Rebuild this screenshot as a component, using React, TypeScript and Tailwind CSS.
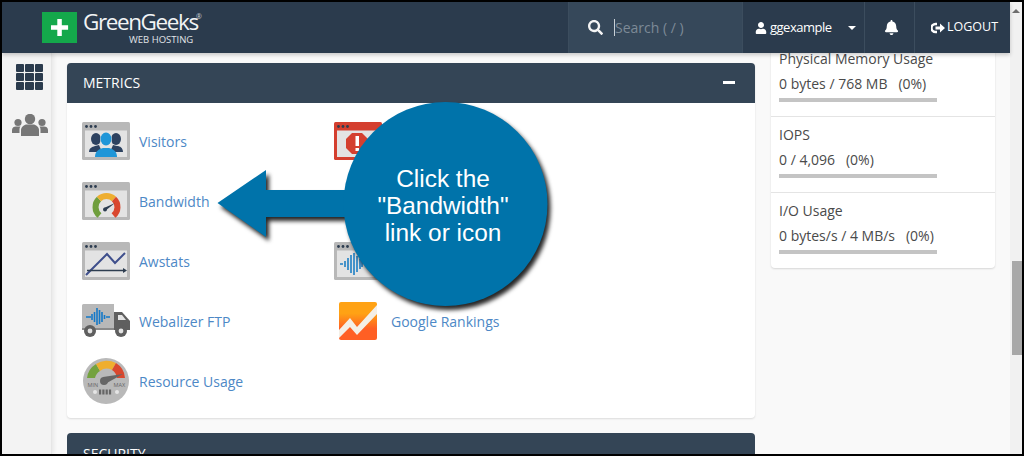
import React from "react";
import { FaSearch, FaBell, FaUser } from "react-icons/fa";

function WindowIcon({ border = "#b8b8b8", children }: { border?: string; children?: React.ReactNode }) {
  return (
    <svg width="48" height="38" viewBox="0 0 48 38" className="block">
      <rect x="0" y="0" width="48" height="38" rx="1.5" fill={border} />
      <rect x="3" y="8.5" width="42" height="26.5" fill="#e3e3e3" />
      <circle cx="4.5" cy="4.5" r="1.4" fill="#2d3d50" />
      <circle cx="9" cy="4.5" r="1.4" fill="#2d3d50" />
      <circle cx="13.5" cy="4.5" r="1.4" fill="#2d3d50" />
      {children}
    </svg>
  );
}

function Visitors() {
  return (
    <WindowIcon>
      <g fill="#2d4260">
        <ellipse cx="14" cy="17" rx="5" ry="6" />
        <path d="M7 30c0-4 3-5 6-6l4-1 3 7z" />
        <ellipse cx="34" cy="17" rx="5" ry="6" />
        <path d="M41 30c0-4-3-6-6-6l-4-1-3 7z" />
      </g>
      <ellipse cx="24" cy="17" rx="6" ry="7" fill="#e3e3e3" />
      <ellipse cx="24" cy="17" rx="5.500" ry="6.500" fill="#1f96d8" />
      <path d="M13 35c0-6 4-8 8-9h6c4 1 8 3 8 9z" fill="#1f96d8" />
    </WindowIcon>
  );
}

function Bandwidth() {
  return (
    <WindowIcon>
      <g fill="none" strokeWidth="6">
        <path d="M17.500 33.500A11 11 0 0 1 17 17" stroke="#6f9e3d" />
        <path d="M17 17A11 11 0 0 1 32 17" stroke="#eeae30" />
        <path d="M32 17A11 11 0 0 1 31.500 33.500" stroke="#d9482f" />
      </g>
      <path d="M22 26l11-5-10 8z" fill="#2d3d50" />
      <circle cx="23" cy="27.500" r="2" fill="#2d3d50" />
    </WindowIcon>
  );
}

function Awstats() {
  return (
    <WindowIcon>
      <path d="M4 33L25 12l8 9L43 11" fill="none" stroke="#3f4f8c" strokeWidth="2" />
      <path d="M5 28.500h37" stroke="#2d3d50" strokeWidth="1.600" />
      <path d="M45 28.500l-4-2.500v5z" fill="#2d3d50" />
    </WindowIcon>
  );
}

function ErrorsIcon() {
  return (
    <WindowIcon border="#d43f2f">
      <path d="M18 11h10l6 6v9l-6 6H18l-6-6v-9z" fill="#d43f2f" />
      <rect x="21.500" y="14" width="3.500" height="10" fill="#fff" />
      <rect x="21.500" y="26" width="3.500" height="3" fill="#fff" />
    </WindowIcon>
  );
}

function WebalizerIcon() {
  return (
    <WindowIcon>
      <path d="M6 22h3M11 19v6M14 16v12M17 13v18M20 11v22M23 14v16M26 17v10M28 19v6" stroke="#1f7fc4" strokeWidth="1.600" fill="none" />
    </WindowIcon>
  );
}

function Truck() {
  return (
    <svg width="48" height="34" viewBox="0 0 48 34" className="block">
      <path d="M0 1.500A1.500 1.500 0 0 1 1.500 0H32v25H0z" fill="#b8b8b8" />
      <path d="M32 8h8l8 9v9H32z" fill="#5f5f5f" />
      <path d="M36 11h4l4 5h-8z" fill="#e3e3e3" />
      <rect x="0" y="24" width="32" height="2" fill="#8a8a8a" />
      <circle cx="8" cy="27" r="6" fill="#5f5f5f" />
      <circle cx="8" cy="27" r="2.400" fill="#e3e3e3" />
      <circle cx="39" cy="27" r="6" fill="#5f5f5f" />
      <circle cx="39" cy="27" r="2.400" fill="#e3e3e3" />
      <path d="M4 13h5M10 10v6M12.500 8v10M15 4v17M17.500 6v14M20 8v10M22.500 11v4M24 13h4" stroke="#1378c8" strokeWidth="1.600" fill="none" />
    </svg>
  );
}

function ResourceGauge() {
  return (
    <svg width="46" height="46" viewBox="0 0 46 46" className="block">
      <circle cx="23" cy="23" r="23" fill="#b9b9b9" />
      <g transform="translate(0 -3)">
        <path d="M4 23A19 19 0 0 1 13 9l4 7a11 11 0 0 0-5 7z" fill="#74a23f" />
        <path d="M13 9a19 19 0 0 1 20-1l-4 7a11 11 0 0 0-12 1z" fill="#efae2e" />
        <path d="M33 8a19 19 0 0 1 9 15h-8a11 11 0 0 0-5-8z" fill="#d9482f" />
      </g>
      <path d="M40 16L20 19l2 7z" fill="#666" />
      <circle cx="21" cy="23" r="4" fill="#666" />
      <text x="4.500" y="28.500" fontSize="5.500" fill="#666" fontFamily="Open Sans">MIN</text>
      <text x="30.500" y="28.500" fontSize="5.500" fill="#666" fontFamily="Open Sans">MAX</text>
      <circle cx="12" cy="34" r="2" fill="#e5e5e5" />
      <circle cx="34" cy="34" r="2" fill="#e5e5e5" />
      <g fill="#666">
        <rect x="16" y="31.500" width="2.200" height="5" />
        <rect x="19.300" y="31.500" width="2.200" height="5" />
        <rect x="22.600" y="31.500" width="2.200" height="5" />
        <rect x="25.900" y="31.500" width="2.200" height="5" />
      </g>
    </svg>
  );
}

function GoogleRankings() {
  return (
    <svg width="38" height="38" viewBox="0 0 38 38" className="block">
      <defs>
        <linearGradient id="gr" x1="0" y1="0" x2="0" y2="1">
          <stop offset="0.3" stopColor="#ffa214" />
          <stop offset="0.7" stopColor="#ff5f24" />
        </linearGradient>
      </defs>
      <rect width="38" height="38" rx="2" fill="url(#gr)" />
      <path d="M0 28L11 16l7 9L38 3v9L18 33l-7-8-11 11z" fill="#f4efe6" />
    </svg>
  );
}

function Item({ icon, label }: { icon: React.ReactNode; label: string }) {
  return (
    <div className="flex h-[60px] items-center">
      <div className="flex w-[48px] shrink-0 justify-center">{icon}</div>
      <a className="ml-[9px] text-[14px] text-[#4d88c6]">{label}</a>
    </div>
  );
}

function Stat({ title, value, pct, first }: { title: string; value: string; pct: string; first?: boolean }) {
  return (
    <div className={`h-[76px] px-2 ${first ? "pt-[9px]" : "border-t border-[#e4e4e4] pt-[8px]"}`}>
      <div className="h-[19px] text-[14px] leading-[19px] text-[#4a4a4a]">{title}</div>
      <div className="mt-[6px] h-[19px] whitespace-pre text-[14px] leading-[19px] text-[#4a4a4a]">
        {value}
        {"   "}
        {pct}
      </div>
      <div className="mt-[5px] h-[4px] w-[158px] bg-[#c4c4c4]" />
    </div>
  );
}

export default function App() {
  return (
    <div className="relative flex h-screen flex-col overflow-hidden border-2 border-black bg-[#f9f9f9] font-['Open_Sans','Liberation_Sans',sans-serif]">
      <div className="flex min-h-0 flex-1">
        <div className="flex min-w-0 flex-1 flex-col">
          {/* Header */}
          <header className="relative z-10 flex h-[51px] shrink-0 items-center bg-[#2b3b4d] text-white shadow-[0_2px_4px_rgba(0,0,0,0.2)]">
            <div className="ml-[40px] flex h-[31px] w-[35px] items-center justify-center bg-[#14a84b]">
              <svg width="19" height="19" viewBox="0 0 19 19">
                <path d="M7 0h5v7h7v5h-7v7H7v-7H0V7h7z" fill="#fff" transform="translate(1 1) scale(0.9)" />
              </svg>
            </div>
            <div className="relative ml-[6px] h-[31px] w-[118px]">
              <div className="absolute -top-[2px] left-0 text-[22.500px] leading-[24px] tracking-[-1.4px] text-[#f2f4f5]">GreenGeeks</div>
              <div className="absolute left-[46px] top-[22px] text-[9.500px] leading-[12px] text-[#e0e4e8]">WEB HOSTING</div>
              <div className="absolute left-[113px] top-[1px] text-[7px] leading-[8px] text-[#ccd2d8]">®</div>
            </div>
            <div className="ml-[367px] flex h-full w-[175px] items-center border-x border-[#3c4d5e] bg-[#36485a]">
              <FaSearch className="ml-[19px] text-[15px] text-[#f4f4f4]" />
              <span className="ml-[11px] h-[17px] w-px bg-[#c9d0d6]" />
              <span className="text-[14px] text-[#7d8a97]">Search ( / )</span>
            </div>
            <div className="flex h-full w-[122px] items-center border-r border-[#3c4d5e]">
              <FaUser className="ml-[12px] text-[12px]" />
              <span className="ml-[3px] text-[13px] font-medium tracking-[-0.5px]">ggexample</span>
              <span className="ml-[16px] mt-[1px] h-0 w-0 border-x-[4px] border-t-[4px] border-x-transparent border-t-white" />
            </div>
            <div className="flex h-full w-[50px] items-center justify-center border-r border-[#3c4d5e] pl-[3px]">
              <FaBell className="text-[15px]" />
            </div>
            <div className="flex h-full flex-1 items-center pl-[16px]">
              <svg width="14" height="12" viewBox="0 0 14 12" className="mr-[2px]">
                <path d="M6 2H4.500a4 4 0 0 0 0 8H6" fill="none" stroke="#fff" strokeWidth="2.400" />
                <path d="M4.500 4.500H9V1.500L14 6l-5 4.500v-3H4.500z" fill="#fff" />
              </svg>
              <span className="text-[12.500px] font-normal">LOGOUT</span>
            </div>
          </header>

          {/* Body */}
          <div className="flex min-h-0 flex-1">
            <aside className="flex w-[50px] shrink-0 flex-col items-center border-r border-[#e6e6e6] bg-[#f3f3f3] pl-[6px] pt-[11px] shadow-[2px_0_4px_rgba(0,0,0,0.07)]">
              <div className="grid w-[28px] grid-cols-3 gap-[1.500px]">
                {Array.from({ length: 9 }).map((_, i) => (
                  <div key={i} className="h-[7.500px] rounded-[1px] bg-[#2b3b4d]" />
                ))}
              </div>
              <svg width="36" height="22" viewBox="0 0 36 22" className="mt-[24px]">
                <g fill="#777">
                  <circle cx="18" cy="5" r="5.200" />
                  <path d="M9 22v-6c0-3 3-5.500 6-5.500h6c3 0 6 2.500 6 5.500v6z" />
                  <circle cx="6" cy="8.500" r="3.600" />
                  <path d="M0 19v-3c0-2.500 2-3.500 4-3.500h4.500c-.8 1-1 2-1 3.500v3z" />
                  <circle cx="30" cy="8.500" r="3.600" />
                  <path d="M36 19v-3c0-2.500-2-3.500-4-3.500h-4.500c.8 1 1 2 1 3.500v3z" />
                </g>
              </svg>
            </aside>

            <main className="flex min-w-0 flex-1 gap-[16px] pl-[15px]">
              <div className="w-[688px] shrink-0 pt-[10px]">
                <section className="h-[355px] rounded-[4px] bg-white shadow-[0_1px_2px_rgba(0,0,0,0.12)]">
                  <div className="flex h-[40px] items-center justify-between rounded-t-[4px] bg-[#344556] pb-[2px] pl-[16px] pr-[20px] text-white">
                    <span className="text-[14px]">METRICS</span>
                    <span className="h-[3px] w-[12px] bg-white" />
                  </div>
                  <div className="grid grid-cols-[252px_1fr] pl-[15px] pt-[8px]">
                    <Item icon={<Visitors />} label="Visitors" />
                    <Item icon={<ErrorsIcon />} label="Errors" />
                    <Item icon={<Bandwidth />} label="Bandwidth" />
                    <div />
                    <Item icon={<Awstats />} label="Awstats" />
                    <Item icon={<WebalizerIcon />} label="Webalizer" />
                    <Item icon={<Truck />} label="Webalizer FTP" />
                    <Item icon={<GoogleRankings />} label="Google Rankings" />
                    <Item icon={<ResourceGauge />} label="Resource Usage" />
                  </div>
                </section>
                <section className="mt-[15px] rounded-t-[4px] bg-[#344556] pl-[16px] text-white">
                  <div className="flex h-[40px] items-center text-[14px]">SECURITY</div>
                </section>
              </div>

              <div className="w-[224px] shrink-0">
                <div className="-mt-[13px] rounded-[4px] bg-white shadow-[0_1px_2px_rgba(0,0,0,0.14)]">
                  <Stat first title="Physical Memory Usage" value="0 bytes / 768 MB" pct="(0%)" />
                  <Stat title="IOPS" value="0 / 4,096" pct="(0%)" />
                  <Stat title="I/O Usage" value="0 bytes/s / 4 MB/s" pct="(0%)" />
                </div>
              </div>
            </main>
          </div>
        </div>

        {/* Scrollbar */}
        <div className="flex w-[12px] shrink-0 flex-col items-center bg-[#f1f1f1]">
          <span className="mt-[7px] h-0 w-0 border-x-[4px] border-b-[4px] border-x-transparent border-b-[#6e6e6e]" />
          <div className="ml-[2px] mt-[248px] h-[94px] w-[10px] bg-[#a8a8a8]" />
        </div>
      </div>

      {/* Annotation */}
      <svg width="1024" height="456" className="pointer-events-none absolute -left-[2px] -top-[2px] z-20 drop-shadow-[3px_4px_2px_rgba(0,0,0,0.85)]">
        <path d="M217.500 203L266 170V190H360V217H266V237z" fill="#0073aa" />
        <circle cx="445.500" cy="204" r="102" fill="#0073aa" />
      </svg>
      <div className="absolute left-[341px] top-[163px] z-30 w-[200px] text-center font-['Liberation_Sans',sans-serif] text-[24.400px] leading-[27px] text-white">
        Click the
        <br />
        "Bandwidth"
        <br />
        link or icon
      </div>
    </div>
  );
}
